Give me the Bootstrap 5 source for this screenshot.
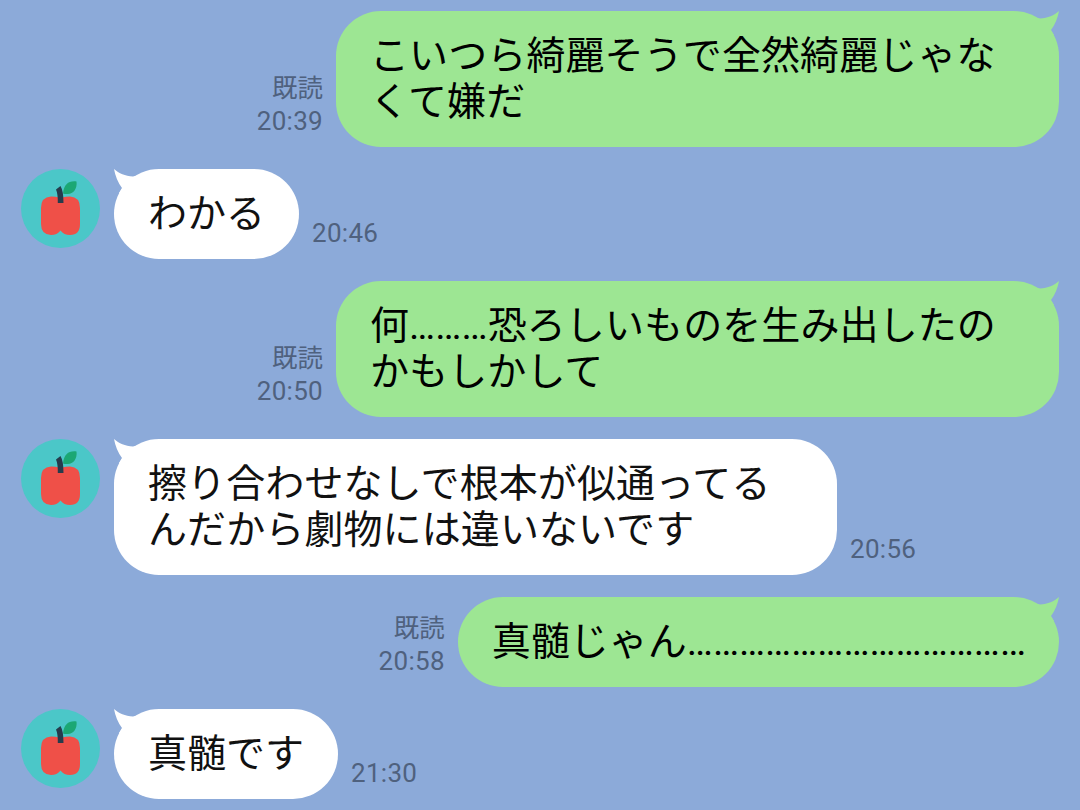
<!DOCTYPE html>
<html lang="ja">
<head>
<meta charset="utf-8">
<meta name="viewport" content="width=device-width, initial-scale=1">
<title>トーク</title>
<link href="https://cdn.jsdelivr.net/npm/bootstrap@5.3.0/dist/css/bootstrap.min.css" rel="stylesheet">
<style>
  body { background: #8caad9; font-family: Roboto, "Noto Sans CJK JP", sans-serif; }
  .talk { height: 810px; padding: 11px 21px 0; gap: 22px; }
  .msg { gap: 13px; }
  .bubble { position: relative; border-radius: 45px; padding: 22px 34px; font-size: 39px; line-height: 46px; color: #111; background: #fff; white-space: nowrap; }
  .wide { width: 723px; letter-spacing: .1px; }
  .sent .bubble { background: #9de693; color: #000; padding-right: 33px; }
  .tail { position: absolute; top: 0; left: 0; width: 30px; height: 24px; fill: #fff; }
  .sent .tail { left: auto; right: 0; transform: scaleX(-1); fill: #9de693; }
  .meta { font-size: 26px; line-height: 33px; color: #4f617e; letter-spacing: .3px; padding-bottom: 9px; }
  .meta span { font-size: 25.5px; letter-spacing: 0; }
  .avatar { width: 79px; height: 79px; margin-right: 1px; }
</style>
</head>
<body>
<svg class="d-none">
  <symbol id="tail" viewBox="0 0 30 24"><path d="M0 0C5 4.500 11 7 19 7.500L30 5V24H5L8 19Q2 11 0 0Z"/></symbol>
  <symbol id="apple" viewBox="0 0 79 79">
    <circle cx="39.5" cy="39.5" r="39.5" fill="#4bc7c8"/>
    <path d="M30 27.500Q35 27.500 38 28.500H41Q45 27.500 49 27.500Q59 28 59 39V55Q59 66 49 66Q43 66 39.500 61.500Q36 66 30 66Q20 65.500 20 55V39Q20 28 30 27.500Z" fill="#ef5048"/>
    <path d="M35 20.500L39.500 17Q42.500 22 42.500 34H36.800Q37 25 35 20.500Z" fill="#263c4c"/>
    <path d="M42 24.500C43 15 48 11.500 55.500 12.500C56.500 20 52 25.500 46 25Q43.500 25 42 24.500Z" fill="#1ba774"/>
  </symbol>
</svg>
<main class="talk d-flex flex-column overflow-hidden">
  <div class="msg sent d-flex justify-content-end align-items-end">
    <div class="meta text-end"><span>既読</span><br>20:39</div>
    <div class="bubble wide"><svg class="tail"><use href="#tail"/></svg><p class="m-0">こいつら綺麗そうで全然綺麗じゃな<br>くて嫌だ</p></div>
  </div>
  <div class="msg d-flex align-items-end">
    <svg class="avatar align-self-start"><use href="#apple"/></svg>
    <div class="bubble"><svg class="tail"><use href="#tail"/></svg><p class="m-0">わかる</p></div>
    <div class="meta">20:46</div>
  </div>
  <div class="msg sent d-flex justify-content-end align-items-end">
    <div class="meta text-end"><span>既読</span><br>20:50</div>
    <div class="bubble wide"><svg class="tail"><use href="#tail"/></svg><p class="m-0">何………恐ろしいものを生み出したの<br>かもしかして</p></div>
  </div>
  <div class="msg d-flex align-items-end">
    <svg class="avatar align-self-start"><use href="#apple"/></svg>
    <div class="bubble wide"><svg class="tail"><use href="#tail"/></svg><p class="m-0">擦り合わせなしで根本が似通ってる<br>んだから劇物には違いないです</p></div>
    <div class="meta">20:56</div>
  </div>
  <div class="msg sent d-flex justify-content-end align-items-end">
    <div class="meta text-end"><span>既読</span><br>20:58</div>
    <div class="bubble"><svg class="tail"><use href="#tail"/></svg><p class="m-0">真髄じゃん…………………………………</p></div>
  </div>
  <div class="msg d-flex align-items-end">
    <svg class="avatar align-self-start"><use href="#apple"/></svg>
    <div class="bubble"><svg class="tail"><use href="#tail"/></svg><p class="m-0">真髄です</p></div>
    <div class="meta">21:30</div>
  </div>
</main>
<script src="https://cdn.jsdelivr.net/npm/bootstrap@5.3.0/dist/js/bootstrap.bundle.min.js"></script>
</body>
</html>
